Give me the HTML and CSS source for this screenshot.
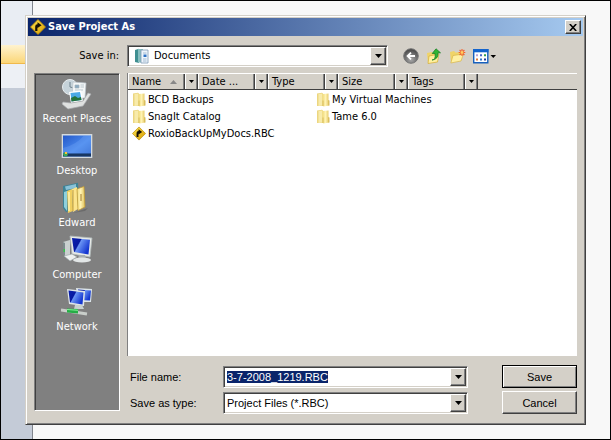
FILE: index.html
```html
<!DOCTYPE html>
<html lang="en">
<head>
<meta charset="utf-8">
<title>Save Project As</title>
<link rel="stylesheet" href="styles.css">
</head>
<body>
<svg class="defs" width="0" height="0" aria-hidden="true">
  <defs>
    <linearGradient id="gold" x1="0" y1="0" x2="1" y2="1"><stop offset="0" stop-color="#ffe650"/><stop offset="1" stop-color="#d59a00"/></linearGradient>
    <linearGradient id="fold" x1="0" y1="0" x2="1" y2="0"><stop offset="0" stop-color="#f0da78"/><stop offset=".45" stop-color="#fff3b4"/><stop offset="1" stop-color="#dfc057"/></linearGradient>
    <linearGradient id="blue" x1="0" y1="0" x2="1" y2="1"><stop offset="0" stop-color="#2458c8"/><stop offset=".55" stop-color="#4a8aee"/><stop offset="1" stop-color="#2a62cc"/></linearGradient>
    <linearGradient id="screen" x1="0" y1="0" x2="1" y2=".5"><stop offset="0" stop-color="#0a1fae"/><stop offset=".42" stop-color="#0618a0"/><stop offset=".48" stop-color="#6a94f4"/><stop offset="1" stop-color="#1436d0"/></linearGradient>
    <radialGradient id="ball" cx=".5" cy=".75" r=".7"><stop offset="0" stop-color="#a8a8a8"/><stop offset="1" stop-color="#484848"/></radialGradient>
    <symbol id="sign" viewBox="0 0 16 16"><path d="M8 .5 15.5 8 8 15.5.5 8Z" fill="url(#gold)" stroke="#b98a08" stroke-width=".8"/><path d="M5.2 12V7.5Q5.2 5.2 7.5 5.2V3.2L11.6 6.2 7.5 9V7.4Q7.4 7.4 7.4 8.2V12Z" fill="#151005"/></symbol>
    <symbol id="folder" viewBox="0 0 14 15"><path d="M1 1.500 6 .8 7 1.500V14H1Z" fill="#ecd680"/><path d="M2.500 2 6.500 1.500V13.500L2.500 14Z" fill="#f8ebab"/><path d="M6.500 2 12.500 1.500V8l.8.500V13.500L7.500 14.500 6.500 13.500Z" fill="url(#fold)"/><path d="M7 8.500v5.500M12.800 8.500v5" stroke="#d2b554" stroke-width=".8"/></symbol>
    <symbol id="down" viewBox="0 0 7 4"><path d="M0 0h7L3.5 4Z" fill="#000"/></symbol>
  </defs>
</svg>

<div class="backdrop" aria-hidden="true"><div class="strip"></div></div>

<main class="dialog">
  <header class="titlebar">
    <svg width="16" height="16"><use href="#sign"/></svg>
    <h1>Save Project As</h1>
    <button class="close" aria-label="Close"><svg width="8" height="7" viewBox="0 0 8 7"><path d="M.8 0 7.2 7M7.2 0 .8 7" stroke="#000" stroke-width="1.6"/></svg></button>
  </header>

  <div class="lookin">
    <label for="folder-select">Save in:</label>
    <div class="combo">
      <svg class="docicon" width="16" height="16" viewBox="0 0 16 16"><path d="M1 2 5 .8V15L1 14Z" fill="#3f8f91"/><path d="M4 1h5v13.5H4Z" fill="#87bec0"/><path d="M7 2h7v13H7Z" fill="#eef5fc" stroke="#7e9bb5" stroke-width=".8"/><path d="M9 5h3.5M9 11h3.5M9 13h3.5" stroke="#8fabc8" stroke-width=".8"/><path d="M9.5 6.5h3V9h-3Z" fill="#2e72c4"/></svg>
      <select id="folder-select"><option>Documents</option></select>
      <span class="arrow"><svg width="7" height="4"><use href="#down"/></svg></span>
    </div>
    <nav class="tools" aria-label="Folder tools">
      <button aria-label="Back"><svg width="16" height="16" viewBox="0 0 16 16"><circle cx="8" cy="8" r="7.3" fill="url(#ball)" stroke="#777"/><path d="M12 8H5M8 4.6 4.6 8 8 11.4" fill="none" stroke="#fff" stroke-width="1.8"/></svg></button>
      <button aria-label="Up one level"><svg width="16" height="16" viewBox="0 0 16 16"><path d="M1 5l5-1 1 1.500 5-.5v9L2 15.500Z" fill="#f0d468"/><path d="M3 8l10-2-1.500 8L2 15.500Z" fill="#fff0a0" stroke="#d2ac3b" stroke-width=".7"/><path d="M6 12Q10 12 9 5.5H6.2L10 .8l4.500 4H12Q12.500 11.500 6 12Z" fill="#30b533" stroke="#127a20" stroke-width=".7"/></svg></button>
      <button aria-label="New folder"><svg width="17" height="16" viewBox="0 0 17 16"><path d="M1 4l4-1 1.5 1.5L12 4v8L2 14.5Z" fill="#f0d468"/><path d="M4 7.5 14.5 6 12 13 1.8 15Z" fill="#fff0a2" stroke="#d7b44a" stroke-width=".7"/><path d="M13 1v7M9.7 4.5h6.6M10.6 2l4.8 5M15.4 2l-4.8 5" stroke="#f2602c" stroke-width="1.1"/><circle cx="13" cy="4.5" r="1.4" fill="#ffd060"/></svg></button>
      <button aria-label="Views"><svg width="23" height="15" viewBox="0 0 23 15"><path d="M.7.7h14.1v13.1H.7Z" fill="#fff" stroke="#1760bd" stroke-width="1.4"/><path d="M0 0h15.5v3.3H0Z" fill="#1464cc"/><path d="M3 5.2h2v2H3Z" fill="#b8a0d8"/><path d="M7 5.2h2v2H7Z" fill="#4568cc"/><path d="M11 5.2h2v2h-2Z" fill="#35a04b"/><path d="M3 9.5h2v2H3Z" fill="#e07838"/><path d="M7 9.5h2v2H7Z" fill="#2c75c8"/><path d="M11 9.5h2v2h-2Z" fill="#203b95"/><path d="M17.5 6H23l-2.7 3Z" fill="#000"/></svg></button>
    </nav>
  </div>

  <div class="content">
    <nav class="places" aria-label="Places">
      <a href="#recent"><svg width="32" height="32" viewBox="0 0 32 32"><circle cx="9" cy="9" r="7.5" fill="#c6d3da" stroke="#e8eef0"/><path d="M9 4v5l4 1" stroke="#71838e" fill="none"/><path d="M12 4 25 5 24 20 11 20Z" fill="#f4f7f8" stroke="#b8c2c8" stroke-width=".7"/><path d="M14 7h4v3h-4ZM19.500 7h3.500M19.500 9h3.500M14 12h8" fill="#8babc2" stroke="#a2b3bc" stroke-width=".7"/><path d="M8 14 20 12.500 22 23 10 25Z" fill="#fff"/><path d="M9.500 15 19 14l1.500 8-10 1.500Z" fill="#4ba9e6"/><path d="M10 20 14 18l3 2 3-1 .5 3-10 1.500Z" fill="#24733c"/><path d="M2 24 10 25 22 23 27 15 30 16 22 28 7 31 1 26Z" fill="#dfe1e0" stroke="#a7abad" stroke-width=".7"/></svg><span>Recent Places</span></a>
      <a href="#desktop"><svg width="32" height="32" viewBox="0 0 32 32"><path d="M.7 4h30.6v24H.7Z" fill="#d4dbe0"/><path d="M2 5.500h28v21H2Z" fill="url(#blue)"/><path d="M2 18 Q15 15 23 5.500h7v18H2Z" fill="#79adf9" opacity=".3"/><path d="M2 23.500h28v3H2Z" fill="#183761"/><circle cx="4.500" cy="24.200" r="2.300" fill="#3aa75b"/><path d="M4 22h2v2H4Z" fill="#ffc13c"/></svg><span>Desktop</span></a>
      <a href="#edward"><svg width="32" height="32" viewBox="0 0 32 32"><path d="M24 27 27 26 24 29 12 31Z" fill="#6b6b6b"/><path d="M2 4 17 .8 18 26 5 30 2 26Z" fill="#3d8296"/><path d="M4 4.500 15 2v4L5 8Z" fill="#8ac2d8"/><path d="M3 10 6 9v20L3 25Z" fill="#8fd0dc"/><path d="M6 9 11 7l1 22-5 2Z" fill="#f0cf60"/><path d="M8 10v19" stroke="#fff3b0" stroke-width="1.500"/><path d="M11 7 16 5l1 22-5 3Z" fill="#fbe48c"/><path d="M12 8v21" stroke="#b98d28" stroke-width=".8"/><path d="M16 7 23 4.500 24 25l-7 3.500Z" fill="url(#fold)" stroke="#c49a2f" stroke-width=".7"/><path d="M20 12v7" stroke="#9f792c"/></svg><span>Edward</span></a>
      <a href="#computer"><svg width="32" height="32" viewBox="0 0 32 32"><path d="M2 8 9 6v16l-5 1Z" fill="#cad0cf"/><path d="M2 8 4 9v14l-2-3Z" fill="#7c898b"/><path d="M2.500 15h1.500v3H2.500Z" fill="#34c448"/><path d="M9 2 31 4 29 23 11 20Z" fill="#e6e9e6" stroke="#aeb7b7" stroke-width=".8"/><path d="M11 4 29 5.800 27.500 20.500 13 18Z" fill="url(#screen)"/><path d="M18 21h6l1 4h-8Z" fill="#a9b0b1"/><ellipse cx="21" cy="26" rx="9" ry="2.600" fill="#e2e6e6"/><path d="M3 22 11 20l5 3-7 4Z" fill="#edf0ef" stroke="#9ba5a7" stroke-width=".6"/></svg><span>Computer</span></a>
      <a href="#network"><svg width="32" height="32" viewBox="0 0 32 32"><path d="M15 2 31 3 30 16 17 16Z" fill="#dce5e9"/><path d="M17 3.500 30 4.500 29 14.500 18 14Z" fill="url(#screen)"/><path d="M6 3 24 5 23 20 8 18Z" fill="#e0e6e8"/><path d="M7.500 4.500 22.500 6.500 21.500 18.500 9 16.500Z" fill="url(#screen)"/><path d="M14 19h7l2 4h-10Z" fill="#c8d1d1"/><path d="M0 24 26 28" stroke="#c9ceca" stroke-width="3"/><path d="M6 22.500 17 23v4.500L6 26.500Z" fill="#25ad46"/><path d="M6 23.500 17 24.300" stroke="#8bf09b"/></svg><span>Network</span></a>
    </nav>

    <div class="main">
      <section class="list" aria-label="Files">
        <div class="columns">
          <div class="col"><button class="name">Name <svg width="7" height="4" viewBox="0 0 7 4"><path d="M0 4 3.500 0 7 4Z" fill="#888"/></svg></button><button class="menu" aria-label="Name options"><svg width="5" height="3"><use href="#down"/></svg></button></div>
          <div class="col"><button class="name">Date ...</button><button class="menu" aria-label="Date options"><svg width="5" height="3"><use href="#down"/></svg></button></div>
          <div class="col"><button class="name">Type</button><button class="menu" aria-label="Type options"><svg width="5" height="3"><use href="#down"/></svg></button></div>
          <div class="col"><button class="name">Size</button><button class="menu" aria-label="Size options"><svg width="5" height="3"><use href="#down"/></svg></button></div>
          <div class="col"><button class="name">Tags</button><button class="menu" aria-label="Tags options"><svg width="5" height="3"><use href="#down"/></svg></button></div>
        </div>
        <ul class="files">
          <li><svg width="14" height="15"><use href="#folder"/></svg>BCD Backups</li>
          <li><svg width="14" height="15"><use href="#folder"/></svg>SnagIt Catalog</li>
          <li><svg width="14" height="15"><use href="#sign"/></svg>RoxioBackUpMyDocs.RBC</li>
          <li><svg width="14" height="15"><use href="#folder"/></svg>My Virtual Machines</li>
          <li><svg width="14" height="15"><use href="#folder"/></svg>Tame 6.0</li>
        </ul>
      </section>

      <form class="fields">
        <label for="file-name">File name:</label>
        <div class="combo">
          <input id="file-name" type="text" value="3-7-2008_1219.RBC" autocomplete="off" spellcheck="false">
          <button type="button" class="arrow" aria-label="Previous names"><svg width="7" height="4"><use href="#down"/></svg></button>
        </div>
        <button type="submit" class="push default">Save</button>
        <label for="file-type">Save as type:</label>
        <div class="combo">
          <select id="file-type"><option>Project Files (*.RBC)</option></select>
          <span class="arrow"><svg width="7" height="4"><use href="#down"/></svg></span>
        </div>
        <button type="button" class="push">Cancel</button>
      </form>
    </div>
  </div>
</main>
<script>
  const nameBox = document.getElementById("file-name");
  nameBox.focus();
  nameBox.select();
</script>
</body>
</html>
```
FILE: styles.css
```css
* { box-sizing: border-box; }

body {
  margin: 0;
  min-height: 100vh;
  padding: 15px 25px;
  display: flex;
  background: #f8f8f8;
  color: #000;
  font: 11px/14px "DejaVu Sans Condensed", "DejaVu Sans", sans-serif;
}

button, input, select { font: inherit; color: inherit; margin: 0; padding: 0; border: 0; border-radius: 0; outline: 0; }
button { display: flex; align-items: center; justify-content: center; background: #d4d0c8; }
svg { display: block; flex: none; }
.defs { position: absolute; }

/* application window behind the dialog */
.backdrop { position: absolute; inset: 0; border: 1px solid #000; }
.strip {
  width: 32px;
  height: 100%;
  border-right: 1px solid #81858d;
  background: linear-gradient(#e9edf3 0 44px, #fff3cf 44px, #fbd678 62px, #f0b94c 62px 63px, #edf0f5 63px 87px, #c4cbd7 87px);
}

.dialog {
  position: relative;
  flex: 1;
  display: flex;
  flex-direction: column;
  padding: 1px;
  background: #d4d0c8;
  border: 1px solid;
  border-color: #d4d0c8 #404040 #404040 #d4d0c8;
  box-shadow: inset 1px 1px #fff, inset -1px -1px #808080;
}

.titlebar {
  display: flex;
  align-items: center;
  gap: 2px;
  height: 18px;
  margin: 1px 1px 0;
  padding: 0 2px;
  background: linear-gradient(90deg, #0a246a, #a6caf0);
  color: #fff;
}
.titlebar h1 { flex: 1; margin: 0; font-size: 11px; line-height: 14px; }
.close { width: 16px; height: 14px; }
.close, .arrow, .push {
  background: #d4d0c8;
  border: 1px solid;
  border-color: #fff #404040 #404040 #fff;
  box-shadow: inset -1px -1px #808080;
}

.lookin { display: flex; align-items: center; margin-top: 9px; padding: 0 7px; }
.lookin label { width: 93px; padding-right: 8px; text-align: right; }
.lookin .combo { flex: 1; }
.tools { display: flex; align-items: center; gap: 7px; width: 189px; padding-left: 15px; }

.combo {
  position: relative;
  display: flex;
  height: 22px;
  padding: 1px;
  background: #fff;
  border: 1px solid;
  border-color: #808080 #fff #fff #808080;
  box-shadow: inset 1px 1px #404040, inset -1px -1px #d4d0c8;
}
.combo select, .combo input {
  flex: 1;
  min-width: 0;
  height: 18px;
  padding: 0 2px;
  appearance: none;
  background: transparent;
}
.docicon { margin: 1px 2px 1px 5px; }
.combo .arrow { width: 16px; height: 18px; display: flex; align-items: center; justify-content: center; }
span.arrow { pointer-events: none; }
input::selection { background: #0a246a; color: #fff; }

.content { flex: 1; display: flex; gap: 7px; padding: 6px 7px 9px; }

.places {
  width: 86px;
  margin-bottom: 3px;
  padding-top: 4px;
  background: #808080;
  border: 1px solid;
  border-color: #808080 #fff #fff #808080;
  box-shadow: inset 1px 1px #404040;
  display: flex;
  flex-direction: column;
  gap: 4px;
}
.places a {
  display: flex;
  flex-direction: column;
  align-items: center;
  gap: 2px;
  color: #fff;
  text-decoration: none;
  white-space: nowrap;
}

.main { flex: 1; display: flex; flex-direction: column; }
.list { flex: 1; background: #fff; border-left: 1px solid #808080; }
.columns { display: flex; height: 17px; background: #d4d0c8; border-top: 1px solid #fff; border-bottom: 1px solid #404040; }
.col { display: flex; width: 70px; }
.columns button { border-right: 1px solid #404040; box-shadow: inset 1px 0 #fff, inset -1px 0 #808080; }
.columns .name { flex: 1; justify-content: flex-start; gap: 9px; padding-left: 4px; }
.columns .menu { width: 13px; }

.files {
  display: grid;
  grid-template-rows: repeat(3, 17px);
  grid-auto-flow: column;
  grid-template-columns: 184px 184px;
  margin: 0;
  padding: 1px 4px;
  list-style: none;
}
.files li { display: flex; align-items: center; gap: 2px; white-space: nowrap; }

.fields {
  display: grid;
  grid-template-columns: 93px 1fr 75px;
  column-gap: 3px;
  row-gap: 3px;
  align-items: center;
  padding-top: 9px;
  font: 11px/14px "Liberation Sans", sans-serif;
}
.fields label { padding-left: 3px; }
.fields .combo { margin-right: 31px; }
.push { height: 23px; }
.push.default { outline: 1px solid #000; outline-offset: -1px; border-color: #000; box-shadow: inset 1px 1px #fff, inset -1px -1px #808080; }
```
